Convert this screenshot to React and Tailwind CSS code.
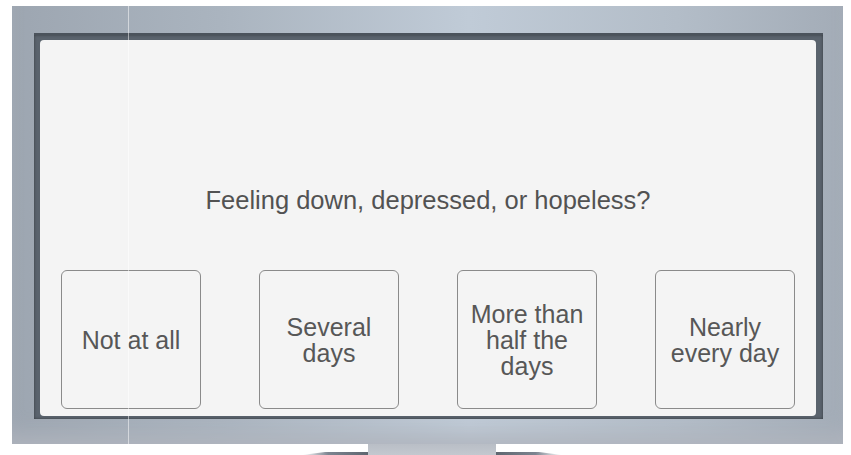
import React from "react";

const options = [
  ["Not at all"],
  ["Several", "days"],
  ["More than", "half the", "days"],
  ["Nearly", "every day"],
];

export default function App() {
  return (
    <div
      className="relative w-[851px] h-[455px] bg-white overflow-hidden pt-[6px] pl-[12px]"
      style={{ fontFamily: '"Liberation Sans", Arial, sans-serif' }}
    >
      {/* monitor frame */}
      <div className="w-[831px] h-[438px] pl-[22px] pt-[27px] pr-[20px] pb-[25px] bg-[linear-gradient(90deg,#9da6b1_0%,#aab4bf_25%,#c0cbd7_55%,#b3bdc8_80%,#a3acb7_100%)] shadow-[inset_0_-20px_20px_-10px_rgba(175,180,188,0.9)]">
        {/* dark bezel */}
        <div className="w-full h-full pl-[6px] pt-[5px] pr-[7px] pb-[3px] bg-[#5a636d] border-t-[2px] border-t-[#4b535c] shadow-[inset_0_0_3px_rgba(0,0,0,0.4)]">
          {/* screen */}
          <div className="w-full h-full rounded-[4px] bg-[#f4f4f4] flex flex-col items-center px-[21px] pb-[7px]">
            <div className="flex-1 flex items-end pb-[55px]">
              <p className="text-[25.5px] leading-[30px] text-[#525252]">
                Feeling down, depressed, or hopeless?
              </p>
            </div>
            <div className="w-full flex justify-between">
              {options.map((lines, i) => (
                <div
                  key={i}
                  className="w-[140px] h-[139px] rounded-[6px] border border-[#8a8a8a] bg-[#f4f4f4] flex flex-col items-center justify-center text-[25px] leading-[26px] text-[#575757] text-center"
                >
                  {lines.map((l, j) => (
                    <span key={j} className="whitespace-nowrap">{l}</span>
                  ))}
                </div>
              ))}
            </div>
          </div>
        </div>
      </div>

      {/* stand */}
      <div className="flex justify-center items-end h-[11px] pl-[1px]">
        <div className="w-[66px] h-[3px] bg-[linear-gradient(90deg,rgba(110,118,128,0)_0%,#7c8490_40%,#5e6670_100%)] [clip-path:polygon(35%_0,100%_0,100%_100%,0_100%)]" />
        <div className="w-[128px] h-[11px] bg-[linear-gradient(180deg,#b9bec6_0%,#c3c8cf_100%)]" />
        <div className="w-[66px] h-[3px] bg-[linear-gradient(90deg,#5e6670_0%,#7c8490_60%,rgba(110,118,128,0)_100%)] [clip-path:polygon(0_0,65%_0,100%_100%,0_100%)]" />
      </div>

      {/* faint vertical seam line */}
      <div className="absolute left-[128px] top-[6px] w-px h-[438px] bg-white/50 pointer-events-none" />
    </div>
  );
}
